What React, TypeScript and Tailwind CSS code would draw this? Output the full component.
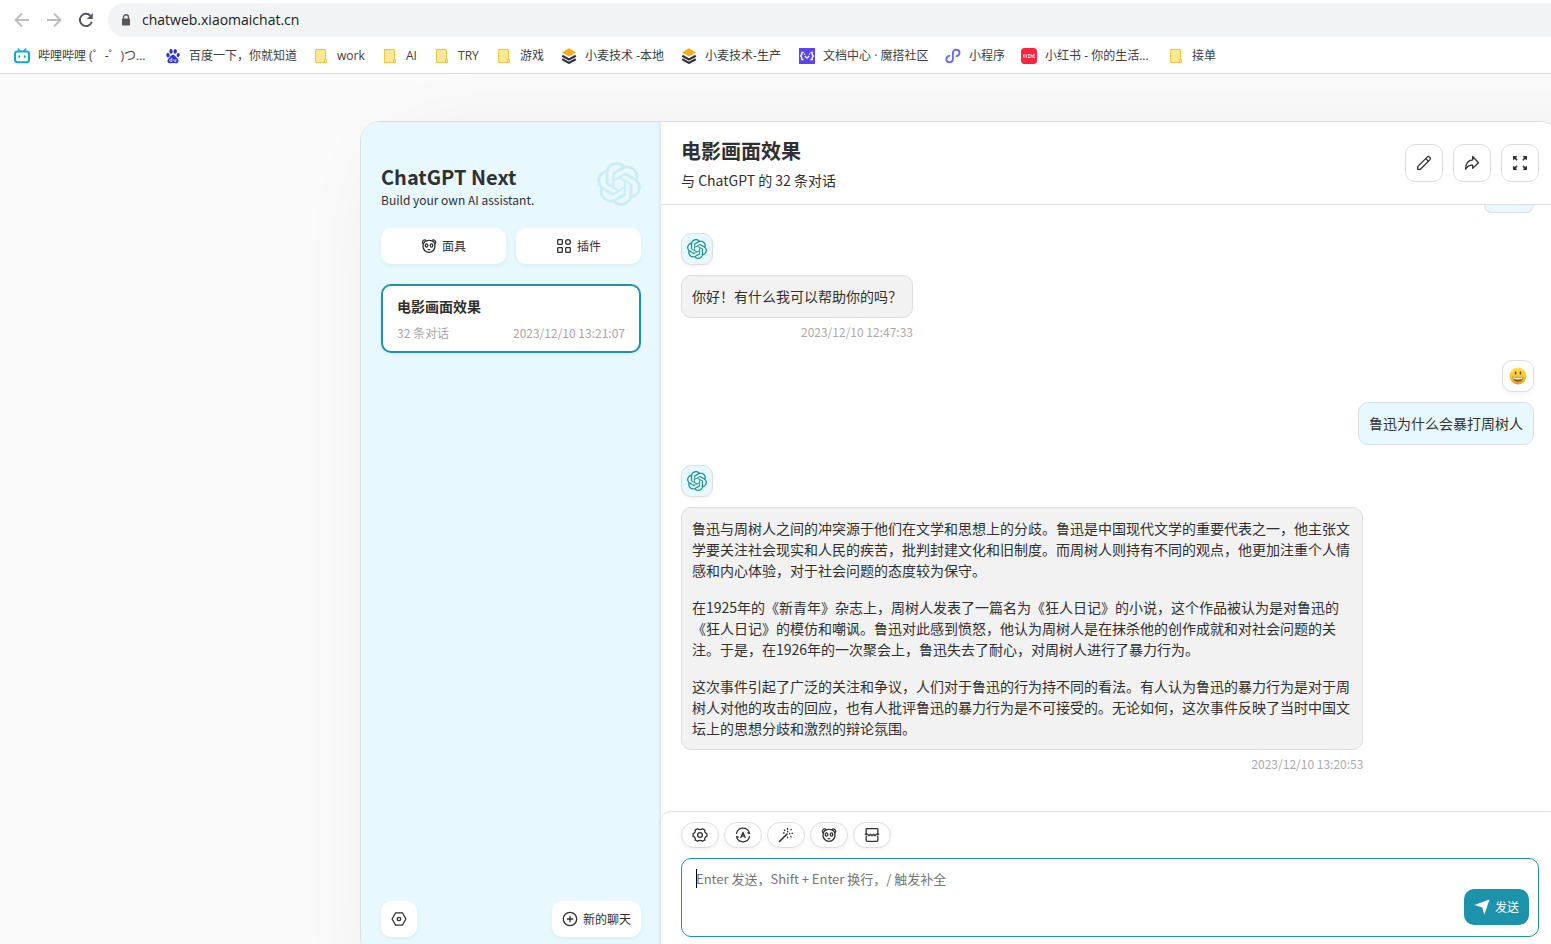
import React, { useState } from 'react';
import { SiOpenai } from 'react-icons/si';

interface IconProps {
  className?: string;
}

interface Bookmark {
  label: string;
  icon: React.ReactNode;
  width: string;
}

interface ChatMessage {
  role: 'user' | 'bot';
  paragraphs: string[];
  date?: string;
}

const Stroke: React.FC<{ children: React.ReactNode; className?: string }> = ({ children, className = 'size-4' }) => (
  <svg
    viewBox="0 0 16 16"
    fill="none"
    stroke="currentColor"
    strokeWidth="1.3"
    strokeLinecap="round"
    strokeLinejoin="round"
    className={className}
    aria-hidden="true"
  >
    {children}
  </svg>
);

/* Browser icons */
const BackIcon = () => (
  <svg viewBox="0 0 16 16" fill="none" stroke="#b9bbbe" strokeWidth="1.8" className="size-4" aria-hidden="true">
    <path d="M15 8H2M8 1.5 1.5 8 8 14.5" />
  </svg>
);

const ForwardIcon = () => (
  <svg viewBox="0 0 16 16" fill="none" stroke="#b9bbbe" strokeWidth="1.8" className="size-4" aria-hidden="true">
    <path d="M1 8h13M8 1.5 14.5 8 8 14.5" />
  </svg>
);

const ReloadIcon = () => (
  <svg viewBox="0 0 16 16" className="size-4" aria-hidden="true">
    <path d="M13.8 9.8A6.1 6.1 0 1 1 12.4 3.7" fill="none" stroke="#54585d" strokeWidth="2" />
    <path d="M14.8 1v6H8.8z" fill="#54585d" />
  </svg>
);

const LockIcon = () => (
  <svg viewBox="0 0 10 12" className="h-3 w-[10px]" aria-hidden="true">
    <path d="M2.5 5V3.2a2.5 2.5 0 0 1 5 0V5" fill="none" stroke="#54585d" strokeWidth="1.4" />
    <rect x="1" y="4.5" width="8" height="7" rx="0.8" fill="#54585d" />
  </svg>
);

const BilibiliIcon = () => (
  <svg viewBox="0 0 16 16" fill="none" stroke="#12a5dc" strokeLinecap="round" className="size-4" aria-hidden="true">
    <rect x="1" y="3.6" width="14" height="10.6" rx="2.4" strokeWidth="2" />
    <path d="M4.2 1 6 2.8M11.8 1 10 2.8" strokeWidth="1.6" />
    <path d="M5.2 8v1M10.8 8v1" strokeWidth="1.7" />
  </svg>
);

const BaiduIcon = () => (
  <svg viewBox="0 0 16 16" fill="#2a32df" className="size-4" aria-hidden="true">
    <ellipse cx="3" cy="7.2" rx="1.7" ry="2.2" transform="rotate(-12 3 7.2)" />
    <ellipse cx="6" cy="3.4" rx="1.7" ry="2.3" />
    <ellipse cx="10.2" cy="3.4" rx="1.7" ry="2.3" transform="rotate(10 10.2 3.4)" />
    <ellipse cx="13.2" cy="7" rx="1.6" ry="2.1" transform="rotate(12 13.2 7)" />
    <path d="M8 6.8c1.6 0 2.3 1.6 3.4 2.8 1 1.1 2.3 1.9 2.1 3.6-.2 1.6-1.5 2.1-2.9 2-1.6-.2-3.4-.2-5 0-1.5.1-2.9-.5-3.1-2-.1-1.7 1.1-2.500 2.100-3.600C5.700 8.400 6.400 6.800 8 6.800z" />
    <path d="M6.800 9.800v3.600H5.700a1 1 0 0 1 0-2.100h1.100M9 11.200v1.500c0 .5.300.700.700.700h1.200v-2.200" fill="none" stroke="#fff" strokeWidth="0.8" />
  </svg>
);

const FolderIcon = () => (
  <svg viewBox="0 0 16 16" className="size-4" aria-hidden="true">
    <path d="M2.5 1.5h10v10h1v3h-11z" fill="#ffe793" stroke="#e9c64a" />
    <path d="M11.5 14.5v-3h1.5" fill="none" stroke="#e9c64a" />
  </svg>
);

const LayersIcon = () => (
  <svg viewBox="0 0 16 16" className="size-4" aria-hidden="true">
    <path d="M8 .3 15.2 4.4 8 8.600 .8 4.400z" fill="#fbac1e" />
    <path d="M1.200 7.800 8 11.500l6.800-3.700M1.200 11.200 8 14.900l6.800-3.700" fill="none" stroke="#33373d" strokeWidth="2.200" />
  </svg>
);

const ModelScopeIcon = () => (
  <svg viewBox="0 0 16 16" className="size-4" aria-hidden="true">
    <rect width="16" height="16" fill="#5a44f5" />
    <path
      d="M4.500 4.500H2.800v2L1.500 8l1.300 1.500v2h1.700M11.500 4.500h1.700v2L14.500 8l-1.300 1.500v2h-1.700M5.800 8l2.200 2L10.200 8M5.500 5.500v1.300M10.500 5.500v1.300"
      fill="none"
      stroke="#fff"
      strokeWidth="1.300"
    />
  </svg>
);

const MiniProgramIcon = () => (
  <svg viewBox="0 0 16 16" fill="none" stroke="#6a6ff0" strokeWidth="1.900" strokeLinecap="round" className="size-4" aria-hidden="true">
    <path d="M4.300 7.800C2.600 8.200 1.300 9.500 1.300 11.200c0 1.700 1.400 3 3.200 3 2 0 3.400-1.300 3.400-3.200V5c0-1.900 1.400-3.200 3.300-3.200 1.800 0 3.300 1.300 3.300 3 0 1.800-1.200 3-2.900 3.400" />
  </svg>
);

const RedBookIcon = () => (
  <svg viewBox="0 0 16 16" className="size-4" aria-hidden="true">
    <rect width="16" height="16" rx="3.500" fill="#ff2442" />
    <path d="M2.500 6.500v3M4 6.200v3.600M5.500 6.500v3M6.800 6.500h2M7.800 6.500v3M6.800 9.500h2.200M10 6.200v3.600M9.800 7.500h2v2.200M12.800 6.200v3.400h1M12.200 6.800h1.500" fill="none" stroke="#fff" strokeWidth="0.800" />
  </svg>
);

/* App icons */
const MaskIcon: React.FC<IconProps> = ({ className }) => (
  <Stroke className={className}>
    <path d="M2.100 5.800A2.200 2.200 0 1 1 5.200 2.600M13.900 5.800A2.200 2.200 0 1 0 10.800 2.600" />
    <path d="M8 2.300c3.500 0 6 2.100 6 5.700s-2.500 6.300-6 6.300S2 11.600 2 8s2.500-5.700 6-5.700z" />
    <ellipse cx="5.500" cy="7.500" rx="1.300" ry="1.700" />
    <ellipse cx="10.500" cy="7.500" rx="1.300" ry="1.700" />
    <path d="M7.200 11.600h1.600" />
  </Stroke>
);

const PluginIcon = () => (
  <Stroke>
    <rect x="1.700" y="1.700" width="4.600" height="4.600" rx="0.600" />
    <circle cx="12" cy="4" r="2.400" />
    <rect x="1.700" y="9.700" width="4.600" height="4.600" rx="0.600" />
    <rect x="9.700" y="9.700" width="4.600" height="4.600" rx="0.600" />
  </Stroke>
);

const PencilIcon = () => (
  <Stroke>
    <path d="M1.700 14.300V11.600L11.400 1.900a1.300 1.300 0 0 1 1.800 0l.9.900a1.300 1.300 0 0 1 0 1.800L4.400 14.300z" />
    <path d="m9.800 3.600 2.600 2.600" />
  </Stroke>
);

const ShareIcon = () => (
  <Stroke>
    <path d="M8.700 1.500 14.500 7.700l-5.800 5.700V10.200C5.300 10 3 11.600 1.500 14.300 1.600 9 4 5.300 8.700 4.900z" />
  </Stroke>
);

const MaximizeIcon = () => (
  <Stroke>
    <path
      d="M1.700 4.300V1.700h2.600M2 2l2.600 2.600M11.700 1.700h2.600v2.600M14 2l-2.600 2.600M1.700 11.700v2.600h2.600M2 14l2.600-2.600M11.700 14.300h2.600v-2.600M14 14l-2.600-2.600"
      strokeWidth="1.500"
    />
  </Stroke>
);

const GearIcon = () => (
  <Stroke>
    <path d="M5.500 1.700c1 1.300 4 1.300 5 0l2.400 1.400c-.7 1.600.6 3.500 2 3.500v2.800c-1.400 0-2.700 1.900-2 3.500l-2.400 1.400c-1-1.300-4-1.300-5 0l-2.400-1.400c.7-1.600-.6-3.500-2-3.500V6.600c1.400 0 2.700-1.900 2-3.500z" />
    <circle cx="8" cy="8" r="2.400" />
  </Stroke>
);

const AutoThemeIcon = () => (
  <Stroke>
    <path d="M1.500 6.300A6.700 6.700 0 0 1 14.500 6.300M14.500 9.700A6.700 6.700 0 0 1 1.500 9.700M12.800 5.800l1.700.5M3.200 10.200 1.500 9.700" />
    <path d="M5.800 10.600 8 5.400l2.200 5.200M6.600 9.200h2.800" />
  </Stroke>
);

const WandIcon = () => (
  <Stroke>
    <path d="M1.500 14.500 9 7" strokeWidth="1.600" />
    <path d="M9.500 1.500v1M6.300 2.900l.6.600M5.500 6h.6M12.800 2.900l.5-.5M14 6.300h.6M12.600 9.400l.5.500M9.600 10.200v.5M9.500 4.800l.3-.3M11.500 6.500l.3.200" />
  </Stroke>
);

const BreakIcon = () => (
  <Stroke>
    <path d="M2.200 7V2.400c0-.5.300-.8.800-.8h10c.5 0 .8.300.8.800V7M2.200 9v4.600c0 .5.300.8.800.8h10c.5 0 .8-.3.800-.8V9" />
    <path d="M1.200 7.200h2.300l1.500 1.500 1.500-1.500L8 8.700l1.500-1.500L11 8.700l1.500-1.500h2.300" />
  </Stroke>
);

const ConfigIcon = () => (
  <Stroke>
    <path d="M4.600 1.800h6.800L14.900 8l-3.500 6.200H4.600L1.100 8z" />
    <circle cx="8" cy="8" r="1.700" />
  </Stroke>
);

const AddIcon = () => (
  <Stroke>
    <circle cx="8" cy="8" r="6.700" />
    <path d="M8 5.300v5.400M5.300 8h5.400" />
  </Stroke>
);

const SendIcon = () => (
  <svg viewBox="0 0 16 16" fill="currentColor" className="size-4" aria-hidden="true">
    <path d="M15.500.5 10.300 15.700 8.300 8.600.5 6z" />
  </svg>
);

const SmileIcon = () => (
  <svg viewBox="0 0 18 18" className="size-[18px]" aria-hidden="true">
    <defs>
      <linearGradient id="face" x1="0" y1="0" x2="0" y2="1">
        <stop offset="0" stopColor="#ffe04d" />
        <stop offset="0.6" stopColor="#fcc22c" />
        <stop offset="1" stopColor="#ee951c" />
      </linearGradient>
    </defs>
    <circle cx="9" cy="9" r="8.4" fill="url(#face)" />
    <ellipse cx="6.600" cy="6" rx="0.800" ry="1.700" fill="#6b3d06" />
    <ellipse cx="11.400" cy="6" rx="0.800" ry="1.700" fill="#6b3d06" />
    <path d="M3.600 9.800c3.500.8 7.300.8 10.800 0 0 3-2.300 4.900-5.400 4.900s-5.400-1.900-5.400-4.900z" fill="#8a5a1c" />
    <path d="M4.200 10.300c3 .7 6.600.7 9.600 0-.1.700-.2 1.200-.5 1.700-2.700.5-5.900.5-8.600 0-.3-.5-.4-1-.5-1.700z" fill="#fff" />
  </svg>
);

const bookmarks: Bookmark[] = [
  { label: '哔哩哔哩 (゜-゜)つ...', icon: <BilibiliIcon />, width: 'min-w-[111px]' },
  { label: '百度一下，你就知道', icon: <BaiduIcon />, width: 'min-w-[108px]' },
  { label: 'work', icon: <FolderIcon />, width: 'min-w-[29px]' },
  { label: 'AI', icon: <FolderIcon />, width: 'min-w-3' },
  { label: 'TRY', icon: <FolderIcon />, width: 'min-w-[22px]' },
  { label: '游戏', icon: <FolderIcon />, width: 'min-w-[25px]' },
  { label: '小麦技术 -本地', icon: <LayersIcon />, width: 'min-w-[80px]' },
  { label: '小麦技术-生产', icon: <LayersIcon />, width: 'min-w-[78px]' },
  { label: '文档中心 · 魔搭社区', icon: <ModelScopeIcon />, width: 'min-w-[106px]' },
  { label: '小程序', icon: <MiniProgramIcon />, width: 'min-w-9' },
  { label: '小红书 - 你的生活...', icon: <RedBookIcon />, width: 'min-w-[107px]' },
  { label: '接单', icon: <FolderIcon />, width: 'min-w-6' },
];

const messages: ChatMessage[] = [
  {
    role: 'bot',
    paragraphs: ['你好！有什么我可以帮助你的吗？'],
    date: '2023/12/10 12:47:33',
  },
  { role: 'user', paragraphs: ['鲁迅为什么会暴打周树人'] },
  {
    role: 'bot',
    paragraphs: [
      '鲁迅与周树人之间的冲突源于他们在文学和思想上的分歧。鲁迅是中国现代文学的重要代表之一，他主张文学要关注社会现实和人民的疾苦，批判封建文化和旧制度。而周树人则持有不同的观点，他更加注重个人情感和内心体验，对于社会问题的态度较为保守。',
      '在1925年的《新青年》杂志上，周树人发表了一篇名为《狂人日记》的小说，这个作品被认为是对鲁迅的《狂人日记》的模仿和嘲讽。鲁迅对此感到愤怒，他认为周树人是在抹杀他的创作成就和对社会问题的关注。于是，在1926年的一次聚会上，鲁迅失去了耐心，对周树人进行了暴力行为。',
      '这次事件引起了广泛的关注和争议，人们对于鲁迅的行为持不同的看法。有人认为鲁迅的暴力行为是对于周树人对他的攻击的回应，也有人批评鲁迅的暴力行为是不可接受的。无论如何，这次事件反映了当时中国文坛上的思想分歧和激烈的辩论氛围。',
    ],
    date: '2023/12/10 13:20:53',
  },
];

const BrowserBar: React.FC = () => (
  <header className="shrink-0 border-b border-[#dadce0] bg-white font-['Open_Sans','Noto_Sans_CJK_SC',sans-serif]">
    <div className="flex h-10 items-center pl-[14px]">
      <div className="flex items-center gap-4">
        <button type="button" aria-label="后退"><BackIcon /></button>
        <button type="button" aria-label="前进"><ForwardIcon /></button>
        <button type="button" aria-label="刷新"><ReloadIcon /></button>
      </div>
      <div className="ml-[14px] flex h-[34px] flex-1 items-center gap-[11px] rounded-l-full bg-[#f1f3f4] pl-[13px]">
        <LockIcon />
        <input
          type="text"
          aria-label="地址"
          defaultValue="chatweb.xiaomaichat.cn"
          className="flex-1 bg-transparent text-sm text-[#202124] outline-none"
        />
      </div>
    </div>
    <nav className="flex h-[33px] items-center gap-4 overflow-hidden pb-[2px] pl-[14px]">
      {bookmarks.map((item) => (
        <a key={item.label} href="#" className="flex items-center gap-2 text-xs whitespace-nowrap text-[#3c4043]">
          {item.icon}
          <span className={item.width}>{item.label}</span>
        </a>
      ))}
    </nav>
  </header>
);

const Sidebar: React.FC = () => (
  <aside className="flex w-[300px] shrink-0 flex-col bg-[#e7f8ff] p-5 shadow-[inset_-2px_0_2px_0_rgba(0,0,0,0.05)]">
    <div className="flex items-start justify-between py-5">
      <div>
        <h1 className="text-xl leading-[30px] font-bold">ChatGPT Next</h1>
        <p className="text-xs leading-4">Build your own AI assistant.</p>
      </div>
      <SiOpenai className="size-11 text-[#cdecf7]" />
    </div>

    <div className="flex gap-[10px]">
      <button type="button" className="flex h-9 flex-1 items-center justify-center gap-[5px] rounded-[10px] bg-white text-xs shadow-[0_2px_4px_0_rgba(0,0,0,0.05)]">
        <MaskIcon className="size-4" />
        面具
      </button>
      <button type="button" className="flex h-9 flex-1 items-center justify-center gap-[5px] rounded-[10px] bg-white text-xs shadow-[0_2px_4px_0_rgba(0,0,0,0.05)]">
        <PluginIcon />
        插件
      </button>
    </div>

    <div className="mt-5 flex-1">
      <a href="#" className="block rounded-[10px] border-2 border-[#1d93ab] bg-white px-[14px] py-[10px] shadow-[0_2px_4px_0_rgba(0,0,0,0.05)]">
        <div className="text-sm leading-[21px] font-bold">电影画面效果</div>
        <div className="mt-2 flex justify-between text-xs leading-4 text-[#a6a6a6]">
          <span>32 条对话</span>
          <span>2023/12/10 13:21:07</span>
        </div>
      </a>
    </div>

    <div className="flex justify-between">
      <button type="button" aria-label="设置" className="flex size-9 items-center justify-center rounded-[10px] bg-white shadow-[0_2px_4px_0_rgba(0,0,0,0.05)]">
        <ConfigIcon />
      </button>
      <button type="button" className="flex h-9 items-center gap-[5px] rounded-[10px] bg-white px-[10px] text-xs shadow-[0_2px_4px_0_rgba(0,0,0,0.05)]">
        <AddIcon />
        新的聊天
      </button>
    </div>
  </aside>
);

const HeaderButton: React.FC<{ label: string; children: React.ReactNode }> = ({ label, children }) => (
  <button type="button" aria-label={label} className="flex size-[38px] items-center justify-center rounded-[10px] border border-[#dedede] bg-white">
    {children}
  </button>
);

const ToolButton: React.FC<{ label: string; children: React.ReactNode }> = ({ label, children }) => (
  <button type="button" aria-label={label} className="flex h-[26px] w-[38px] items-center justify-center rounded-full border border-[#dedede] bg-white shadow-[0_2px_4px_0_rgba(0,0,0,0.05)]">
    {children}
  </button>
);

const Message: React.FC<{ message: ChatMessage }> = ({ message }) => {
  const isUser = message.role === 'user';

  return (
    <div className={isUser ? 'flex flex-col items-end' : 'flex flex-col items-start'}>
      <div className="flex max-w-[80%] flex-col">
        <div
          className={
            isUser
              ? 'flex size-8 items-center justify-center self-end rounded-[10px] border border-[#dedede] bg-white shadow-[0_2px_4px_0_rgba(0,0,0,0.05)]'
              : 'flex size-8 items-center justify-center rounded-[10px] border border-[#dedede] bg-[#e7f8ff] shadow-[0_2px_4px_0_rgba(0,0,0,0.05)]'
          }
        >
          {isUser ? <SmileIcon /> : <SiOpenai className="size-5 text-[#1f948c]" />}
        </div>
        <div
          className={
            isUser
              ? 'mt-[10px] space-y-4 rounded-[10px] border border-[#dedede] bg-[#e7f8ff] p-[10px] text-sm leading-[21px]'
              : 'mt-[10px] space-y-4 rounded-[10px] border border-[#dedede] bg-[#f2f2f2] p-[10px] text-sm leading-[21px]'
          }
        >
          {message.paragraphs.map((text) => (
            <p key={text}>{text}</p>
          ))}
        </div>
        {message.date && (
          <div className="mt-[6px] text-right text-xs leading-4 text-[#aaaaaa]">{message.date}</div>
        )}
      </div>
    </div>
  );
};

const ChatPanel: React.FC = () => {
  const [input, setInput] = useState('');

  return (
    <main className="flex min-w-0 flex-1 flex-col bg-white">
      <div className="flex h-[83px] shrink-0 items-center justify-between border-b border-[#dedede] px-5">
        <div>
          <h2 className="text-xl leading-[30px] font-bold">电影画面效果</h2>
          <p className="mt-1 text-sm leading-[21px]">与 ChatGPT 的 32 条对话</p>
        </div>
        <div className="flex gap-[10px]">
          <HeaderButton label="重命名"><PencilIcon /></HeaderButton>
          <HeaderButton label="分享"><ShareIcon /></HeaderButton>
          <HeaderButton label="全屏"><MaximizeIcon /></HeaderButton>
        </div>
      </div>

      {/* Conversation */}
      <div className="flex min-h-0 flex-1 flex-col gap-5 overflow-hidden pr-[25px] pl-5">
        <div className="h-2 w-[50px] shrink-0 self-end rounded-b-[10px] border border-t-0 border-[#dedede] bg-[#e7f8ff]" />
        {messages.map((message) => (
          <Message key={message.paragraphs[0]} message={message} />
        ))}
      </div>

      {/* Input panel */}
      <div className="shrink-0 rounded-t-[10px] border-t border-[#dedede] px-5 pt-[10px] pb-5 shadow-[0_2px_4px_0_rgba(0,0,0,0.05)]">
        <div className="flex gap-[5px]">
          <ToolButton label="对话设置"><GearIcon /></ToolButton>
          <ToolButton label="自动主题"><AutoThemeIcon /></ToolButton>
          <ToolButton label="快捷指令"><WandIcon /></ToolButton>
          <ToolButton label="所有面具"><MaskIcon className="size-4" /></ToolButton>
          <ToolButton label="清除聊天"><BreakIcon /></ToolButton>
        </div>
        <div className="relative mt-[10px]">
          <textarea
            aria-label="消息"
            value={input}
            onChange={(e) => setInput(e.target.value)}
            placeholder="Enter 发送，Shift + Enter 换行，/ 触发补全"
            className="block h-[79px] w-full resize-none rounded-[10px] border border-[#1d93ab] bg-white px-[14px] py-[10px] text-[13px] leading-5 outline-none placeholder:text-[#757575]"
          />
          {input === '' && <span className="absolute top-[11px] left-[15px] h-[19px] w-px bg-black" />}
          <button type="button" className="absolute right-[10px] bottom-3 flex h-9 items-center gap-[5px] rounded-[10px] bg-[#1d93ab] px-[10px] text-xs text-white">
            <SendIcon />
            发送
          </button>
        </div>
      </div>
    </main>
  );
};

const App: React.FC = () => {
  return (
    <div className="flex h-screen flex-col overflow-hidden bg-[#fafafa] font-['Noto_Sans_CJK_SC',sans-serif] text-[#303030]">
      <BrowserBar />
      <div className="flex min-h-0 flex-1 overflow-hidden">
        <div className="mt-[47px] -mr-[9px] -mb-[14px] ml-[360px] flex min-w-0 flex-1 overflow-hidden rounded-[20px] border border-[#dedede] bg-white shadow-[50px_50px_100px_10px_rgba(0,0,0,0.1)]">
          <Sidebar />
          <ChatPanel />
        </div>
      </div>
    </div>
  );
};

export default App;
